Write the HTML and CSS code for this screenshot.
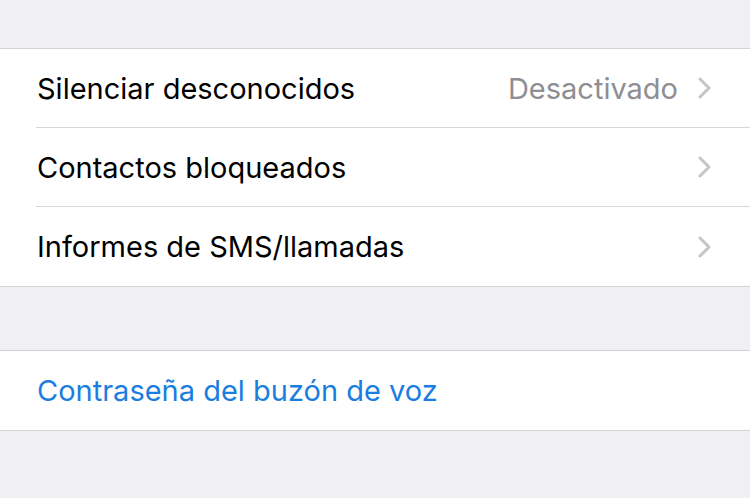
FILE: index.html
```html
<!DOCTYPE html>
<html lang="es">
<head>
  <meta charset="UTF-8">
  <meta name="viewport" content="width=device-width, initial-scale=1.0">
  <title>Teléfono</title>
  <link rel="stylesheet" href="styles.css">
</head>
<body>
  <div class="group">
    <div class="row">
      <span class="label">Silenciar desconocidos</span>
      <span class="value">Desactivado</span>
      <svg class="chevron" viewBox="0 0 14 22"><path d="M2 2 L11 11 L2 20"/></svg>
    </div>
    <div class="row">
      <span class="label">Contactos bloqueados</span>
      <svg class="chevron" viewBox="0 0 14 22"><path d="M2 2 L11 11 L2 20"/></svg>
    </div>
    <div class="row">
      <span class="label">Informes de SMS/llamadas</span>
      <svg class="chevron" viewBox="0 0 14 22"><path d="M2 2 L11 11 L2 20"/></svg>
    </div>
  </div>

  <div class="group">
    <div class="row">
      <span class="label link">Contraseña del buzón de voz</span>
    </div>
  </div>
</body>
</html>
```

FILE: styles.css
```css
body {
  margin: 0;
  padding: 48px 0 0;
  background: #efeff4;
  font-family: Inter, "Noto Sans", sans-serif;
  font-size: 29px;
  color: #000;
}

.group {
  background: #fff;
  border-top: 1px solid #d1d1d6;
  border-bottom: 1px solid #d1d1d6;
  padding-left: 36px;
  margin-bottom: 63px;
}

.row {
  display: flex;
  align-items: center;
  height: 78px;
  padding-right: 38px;
  border-bottom: 1px solid #d8d8dc;
}

.row:last-child {
  height: 79px;
  border-bottom: none;
}

.label {
  flex: 1;
  padding-left: 1px;
}

.value {
  color: #8e8e93;
  margin-right: 20px;
}

.link {
  color: #1a7ee0;
}

.chevron {
  width: 14px;
  height: 22px;
  fill: none;
  stroke: #c4c4c9;
  stroke-width: 3;
  stroke-linecap: round;
  stroke-linejoin: round;
}
```
